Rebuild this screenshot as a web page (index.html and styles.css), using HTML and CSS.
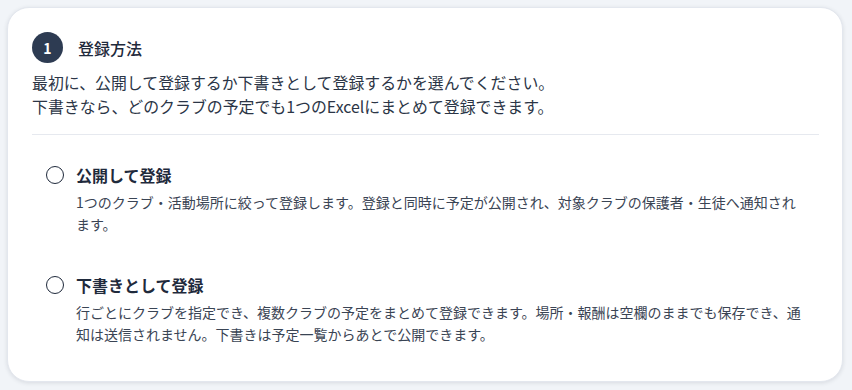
FILE: index.html
```html
<!DOCTYPE html>
<html lang="ja">
<head>
  <meta charset="UTF-8" />
  <title>登録方法</title>
  <link rel="stylesheet" href="styles.css">
</head>
<body>
  <div class="card">
    <div class="step-head">
      <span class="step-num">1</span>
      <h2>登録方法</h2>
    </div>
    <p class="lead">最初に、公開して登録するか下書きとして登録するかを選んでください。<br>下書きなら、どのクラブの予定でも1つのExcelにまとめて登録できます。</p>
    <hr class="divider">

    <div class="options">
      <label class="option">
        <input type="radio" name="mode" value="publish">
        <div class="option-body">
          <div class="option-title">公開して登録</div>
          <div class="option-desc">1つのクラブ・活動場所に絞って登録します。登録と同時に予定が公開され、対象クラブの保護者・生徒へ通知されます。</div>
        </div>
      </label>
      <label class="option">
        <input type="radio" name="mode" value="draft">
        <div class="option-body">
          <div class="option-title">下書きとして登録</div>
          <div class="option-desc">行ごとにクラブを指定でき、複数クラブの予定をまとめて登録できます。場所・報酬は空欄のままでも保存でき、通知は送信されません。下書きは予定一覧からあとで公開できます。</div>
        </div>
      </label>
    </div>
  </div>
</body>
</html>
```

FILE: styles.css
```css
html, body {
  margin: 0;
  padding: 0;
  background: #f1f4f8;
  font-family: "Noto Sans CJK JP", "Noto Sans", sans-serif;
  color: #2b3546;
}

body {
  padding: 7px 9px 8px 7px;
}

.card {
  background: #fff;
  border: 1px solid #e3e7ee;
  border-radius: 22px;
  box-shadow: 0 1px 4px rgba(30, 41, 59, 0.12);
  padding: 24px 23px 24px 24px;
}

.step-head {
  display: flex;
  align-items: center;
  gap: 15px;
}

.step-num {
  width: 31px;
  height: 31px;
  border-radius: 50%;
  background: #2d3b52;
  color: #fff;
  font-size: 14px;
  font-weight: 700;
  display: flex;
  align-items: center;
  justify-content: center;
}

.step-head h2 {
  margin: 0;
  font-size: 16px;
  font-weight: 500;
  color: #1f2a3c;
}

.lead {
  margin: 8px 0 0;
  font-size: 15.9px;
  line-height: 24px;
  color: #2b3546;
}

.divider {
  border: none;
  border-top: 1px solid #e6e9ef;
  margin: 15px 0 0;
}

.options {
  display: flex;
  flex-direction: column;
  gap: 14px;
  margin-top: 16px;
}

.option {
  display: flex;
  align-items: flex-start;
  gap: 12px;
  padding: 12px 14px;
  cursor: pointer;
}

.option input {
  appearance: none;
  margin: 3px 0 0;
  width: 18px;
  height: 18px;
  border: 1.5px solid #1f2a3c;
  border-radius: 50%;
  flex-shrink: 0;
}

.option-title {
  font-size: 16px;
  font-weight: 700;
  line-height: 24px;
  color: #1f2a3c;
}

.option-desc {
  margin-top: 4px;
  font-size: 14px;
  line-height: 22px;
  color: #3a4454;
}
```
